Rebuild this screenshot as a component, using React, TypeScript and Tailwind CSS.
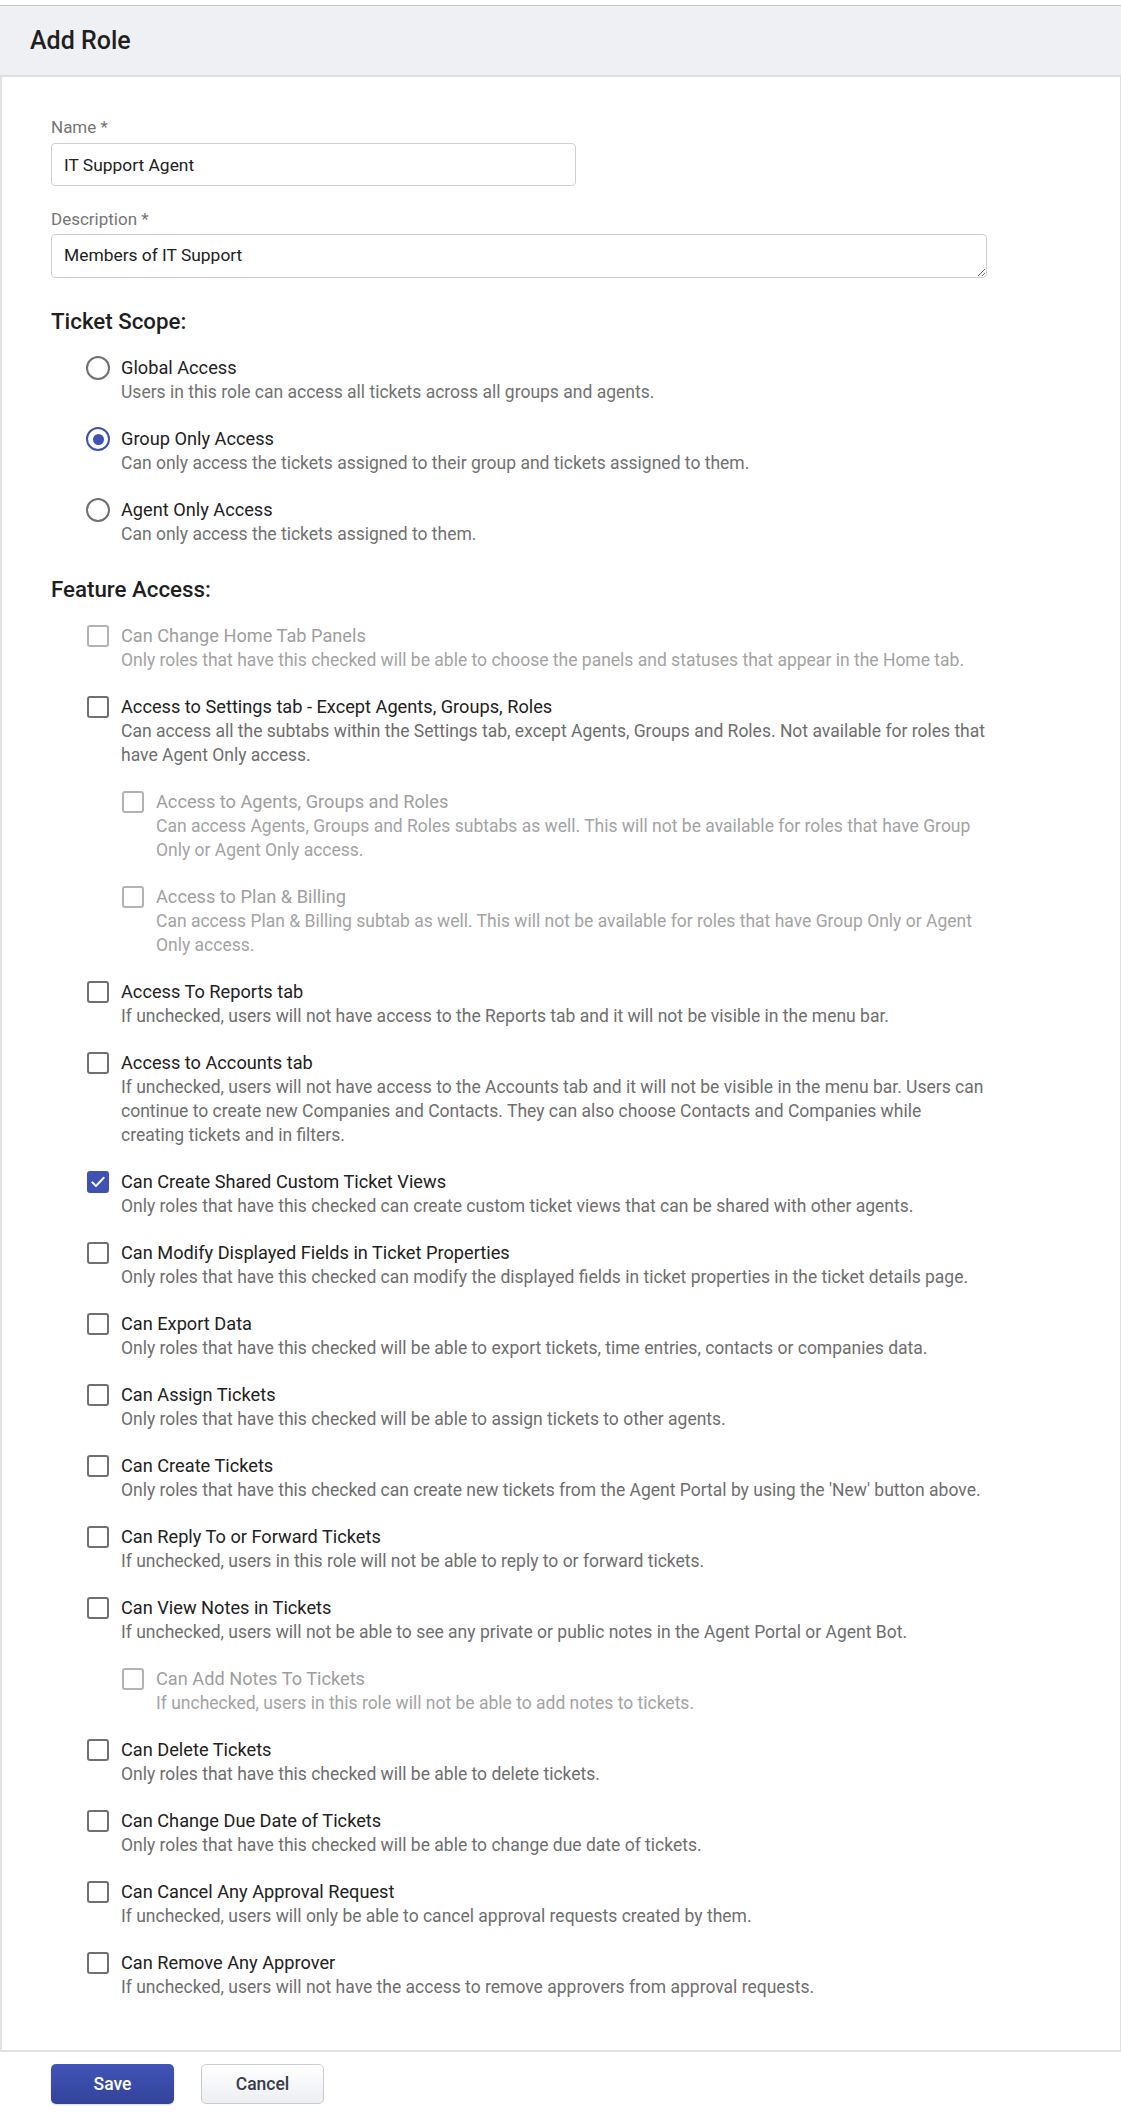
import React from "react";

type Feature = {
  title: string;
  desc: React.ReactNode;
  disabled?: boolean;
  checked?: boolean;
  sub?: boolean;
};

const features: Feature[] = [
  {
    title: "Can Change Home Tab Panels",
    desc: "Only roles that have this checked will be able to choose the panels and statuses that appear in the Home tab.",
    disabled: true,
  },
  {
    title: "Access to Settings tab - Except Agents, Groups, Roles",
    desc: "Can access all the subtabs within the Settings tab, except Agents, Groups and Roles. Not available for roles that have Agent Only access.",
  },
  {
    title: "Access to Agents, Groups and Roles",
    desc: "Can access Agents, Groups and Roles subtabs as well. This will not be available for roles that have Group Only or Agent Only access.",
    disabled: true,
    sub: true,
  },
  {
    title: "Access to Plan & Billing",
    desc: "Can access Plan & Billing subtab as well. This will not be available for roles that have Group Only or Agent Only access.",
    disabled: true,
    sub: true,
  },
  {
    title: "Access To Reports tab",
    desc: "If unchecked, users will not have access to the Reports tab and it will not be visible in the menu bar.",
  },
  {
    title: "Access to Accounts tab",
    desc: (
      <>
        If unchecked, users will not have access to the Accounts tab and it will not be visible in the menu bar. Users can
        continue to create new Companies and Contacts. They can also choose Contacts and Companies while
        <br />
        creating tickets and in filters.
      </>
    ),
  },
  {
    title: "Can Create Shared Custom Ticket Views",
    desc: "Only roles that have this checked can create custom ticket views that can be shared with other agents.",
    checked: true,
  },
  {
    title: "Can Modify Displayed Fields in Ticket Properties",
    desc: "Only roles that have this checked can modify the displayed fields in ticket properties in the ticket details page.",
  },
  {
    title: "Can Export Data",
    desc: "Only roles that have this checked will be able to export tickets, time entries, contacts or companies data.",
  },
  {
    title: "Can Assign Tickets",
    desc: "Only roles that have this checked will be able to assign tickets to other agents.",
  },
  {
    title: "Can Create Tickets",
    desc: "Only roles that have this checked can create new tickets from the Agent Portal by using the 'New' button above.",
  },
  {
    title: "Can Reply To or Forward Tickets",
    desc: "If unchecked, users in this role will not be able to reply to or forward tickets.",
  },
  {
    title: "Can View Notes in Tickets",
    desc: "If unchecked, users will not be able to see any private or public notes in the Agent Portal or Agent Bot.",
  },
  {
    title: "Can Add Notes To Tickets",
    desc: "If unchecked, users in this role will not be able to add notes to tickets.",
    disabled: true,
    sub: true,
  },
  {
    title: "Can Delete Tickets",
    desc: "Only roles that have this checked will be able to delete tickets.",
  },
  {
    title: "Can Change Due Date of Tickets",
    desc: "Only roles that have this checked will be able to change due date of tickets.",
  },
  {
    title: "Can Cancel Any Approval Request",
    desc: "If unchecked, users will only be able to cancel approval requests created by them.",
  },
  {
    title: "Can Remove Any Approver",
    desc: "If unchecked, users will not have the access to remove approvers from approval requests.",
  },
];

const radios = [
  {
    title: "Global Access",
    desc: "Users in this role can access all tickets across all groups and agents.",
    checked: false,
  },
  {
    title: "Group Only Access",
    desc: "Can only access the tickets assigned to their group and tickets assigned to them.",
    checked: true,
  },
  {
    title: "Agent Only Access",
    desc: "Can only access the tickets assigned to them.",
    checked: false,
  },
];

function Checkbox({ checked, disabled }: { checked?: boolean; disabled?: boolean }) {
  if (checked) {
    return (
      <div className="w-[22px] h-[22px] rounded-[3px] bg-[#3f51b5] flex items-center justify-center">
        <svg width="18" height="18" viewBox="0 0 24 24" fill="none">
          <path d="M4.5 12.5l4.8 4.8L19.5 6.5" stroke="white" strokeWidth="2.8" strokeLinecap="round" strokeLinejoin="round" />
        </svg>
      </div>
    );
  }
  return (
    <div
      className={
        disabled
          ? "w-[22px] h-[22px] rounded-[3px] border-2 border-[#b3b3b3] bg-white"
          : "w-[22px] h-[22px] rounded-[3px] border-2 border-[#707070] bg-white"
      }
    />
  );
}

function Radio({ checked }: { checked?: boolean }) {
  if (checked) {
    return (
      <div className="w-[24px] h-[24px] rounded-full border-2 border-[#3f51b5] flex items-center justify-center">
        <div className="w-[11px] h-[11px] rounded-full bg-[#3f51b5]" />
      </div>
    );
  }
  return <div className="w-[24px] h-[24px] rounded-full border-2 border-[#707070]" />;
}

export default function App() {
  return (
    <div className="min-h-[2114px] bg-white font-['Roboto','Liberation_Sans',sans-serif] text-[17.5px] leading-[24px] text-[#212121]">
      <div className="pt-[5px]">
        <div className="h-[72px] border-t border-[#c5c7d0] border-b-2 border-b-[#dddee4] bg-[#eff0f4] flex items-center pl-[30px]">
          <h1 className="text-[25px] font-medium text-[#1f1f1f] leading-[30px]">Add Role</h1>
        </div>
      </div>

      <div className="border-l-2 border-r border-b-2 border-[#e0e1e5] pl-[49px] pt-[38px] pb-[51px]">
        <div className="text-[17px] text-[#757575]">Name *</div>
        <div className="mt-[4px] w-[525px] h-[43px] border border-[#cfcfcf] rounded-[4px] flex items-center pl-[12px] text-[17.4px] text-[#212121]">
          IT Support Agent
        </div>

        <div className="mt-[21px] text-[17px] text-[#757575]">Description *</div>
        <textarea
          readOnly
          defaultValue="Members of IT Support"
          className="block mt-[3px] w-[936px] h-[44px] border border-[#cfcfcf] rounded-[4px] pl-[12px] pt-[8px] text-[17.4px] leading-[24px] text-[#212121] resize-y outline-none overflow-hidden"
        />

        <h2 className="mt-[29px] text-[22.3px] leading-[28px] font-medium text-[#1f1f1f]">Ticket Scope:</h2>
        <div className="mt-[21px] ml-[35px] flex flex-col gap-[23px]">
          {radios.map((r) => (
            <div key={r.title} className="flex gap-[11px]">
              <div className="w-[24px] h-[24px] flex items-center justify-center">
                <Radio checked={r.checked} />
              </div>
              <div>
                <div className="text-[18.2px] text-[#212121]">{r.title}</div>
                <div className="text-[#717171]">{r.desc}</div>
              </div>
            </div>
          ))}
        </div>

        <h2 className="mt-[29px] text-[22.3px] leading-[28px] font-medium text-[#1f1f1f]">Feature Access:</h2>
        <div className="mt-[21px] ml-[35px] flex flex-col gap-[23px]">
          {features.map((f) => (
            <div key={f.title} className={f.sub ? "flex gap-[11px] ml-[35px]" : "flex gap-[11px]"}>
              <div className="w-[24px] h-[24px] flex items-center justify-center">
                <Checkbox checked={f.checked} disabled={f.disabled} />
              </div>
              <div className={f.sub ? "w-[840px]" : "w-[875px]"}>
                <div className={f.disabled ? "text-[18.2px] text-[#9e9e9e]" : "text-[18.2px] text-[#212121]"}>{f.title}</div>
                <div className={f.disabled ? "text-[#a3a3a3]" : "text-[#6e6e6e]"}>{f.desc}</div>
              </div>
            </div>
          ))}
        </div>
      </div>

      <div className="flex gap-[27px] pl-[51px] pt-[12px] pb-[12px]">
        <button className="w-[123px] h-[40px] rounded-[5px] bg-gradient-to-b from-[#4154b8] to-[#33439a] text-white text-[17.5px] font-medium shadow-[0_1px_2px_rgba(0,0,0,0.15)]">
          Save
        </button>
        <button className="w-[123px] h-[40px] rounded-[5px] border border-[#c9cbd3] bg-gradient-to-b from-[#ffffff] to-[#eceef2] text-[#3a3c48] text-[17.5px] font-medium">
          Cancel
        </button>
      </div>
    </div>
  );
}
